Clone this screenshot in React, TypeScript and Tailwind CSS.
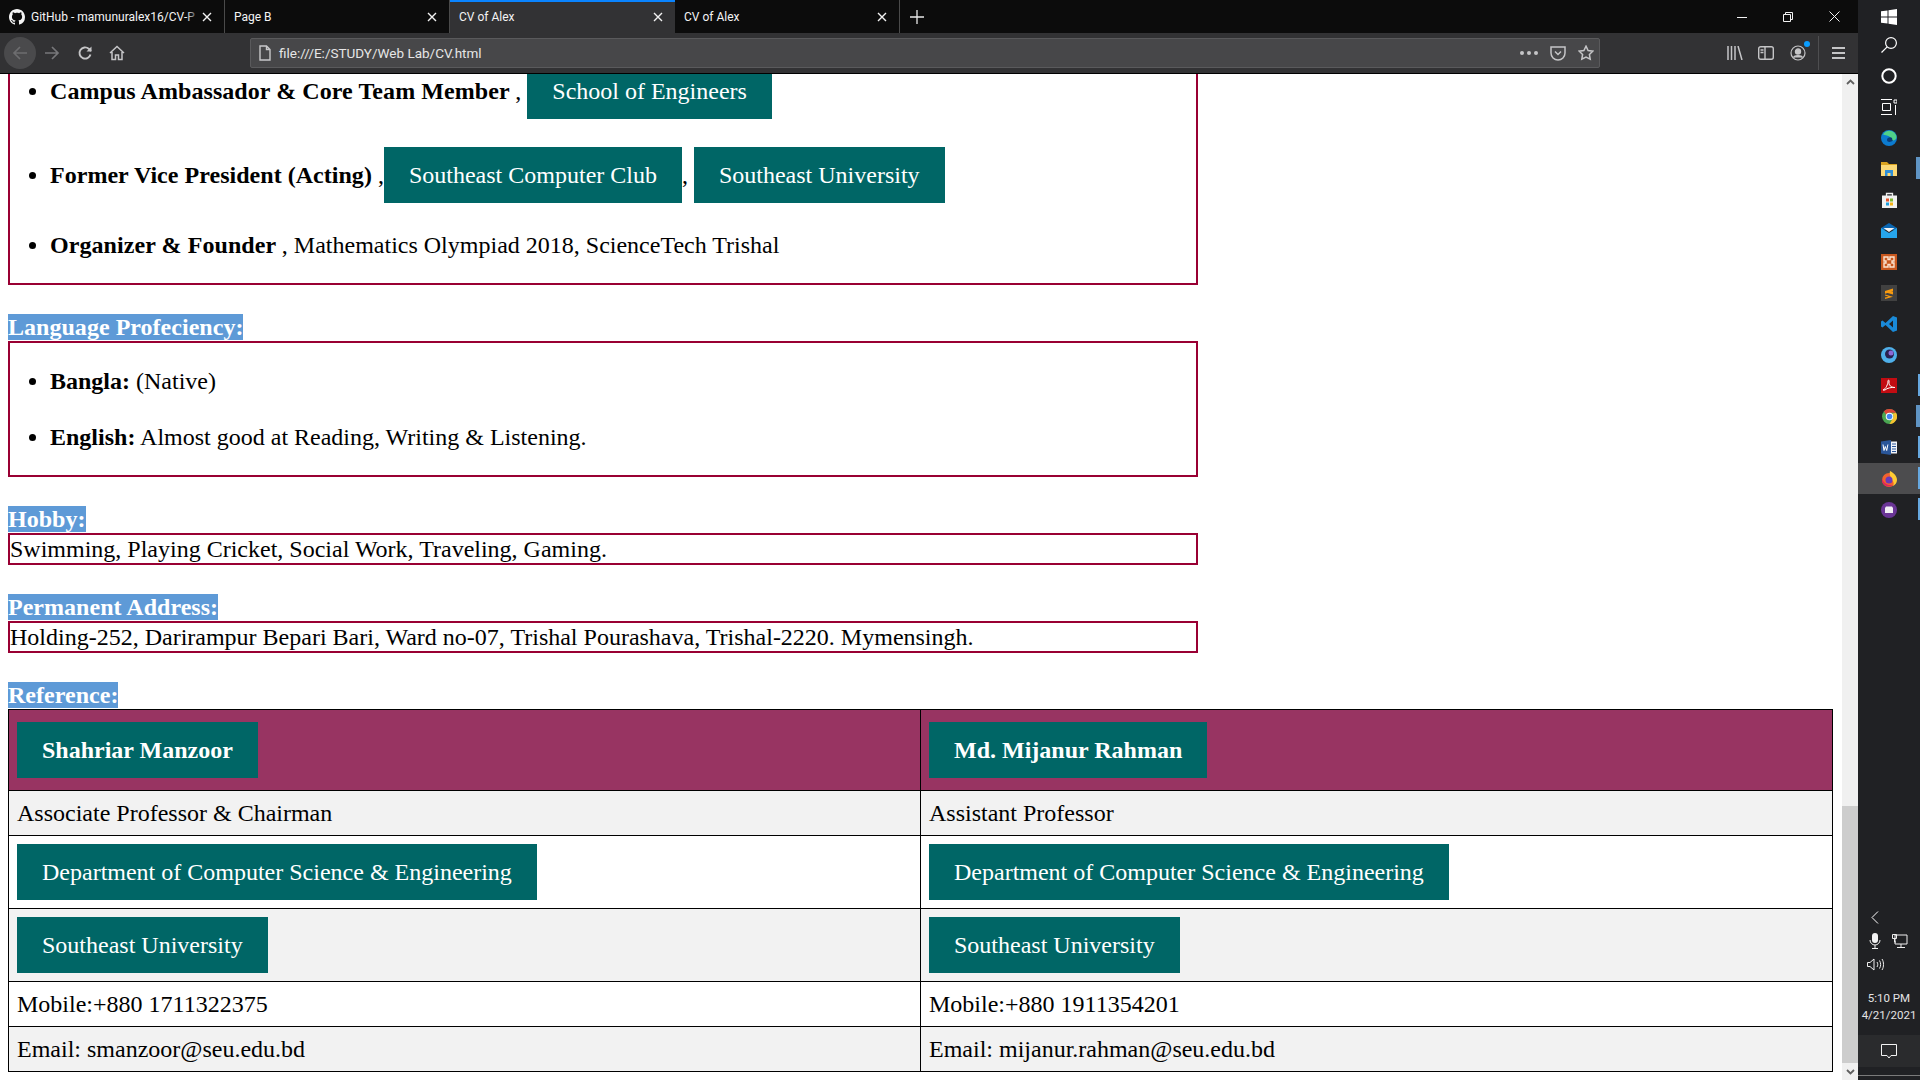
import { Fragment, type ReactNode } from 'react'

const uiFont = "font-['Roboto',sans-serif]"

function CloseIcon() {
  return (
    <svg width="10" height="10" viewBox="0 0 10 10" className="shrink-0">
      <path d="M1 1l8 8M9 1l-8 8" stroke="#f2f2f2" strokeWidth="1.4" fill="none" />
    </svg>
  )
}

function Tab({ title, active, github }: { title: string; active?: boolean; github?: boolean }) {
  return (
    <div
      className={`relative flex h-full w-[225px] items-center gap-[6px] pl-[9px] pr-[12px] text-[12px] text-[#f4f4f4] ${
        active ? 'bg-[#323234]' : 'border-r border-[#4a4a4a]'
      }`}
    >
      {active && <div className="absolute left-0 right-0 top-0 h-[2px] bg-[#0a84ff]" />}
      {github && (
        <svg width="16" height="16" viewBox="0 0 16 16" className="shrink-0" fill="#f4f4f4">
          <path d="M8 0C3.58 0 0 3.58 0 8c0 3.54 2.29 6.53 5.47 7.59.4.07.55-.17.55-.38 0-.19-.01-.82-.01-1.49-2.01.37-2.53-.49-2.69-.94-.09-.23-.48-.94-.82-1.13-.28-.15-.68-.52-.01-.53.63-.01 1.08.58 1.23.82.72 1.21 1.87.87 2.33.66.07-.52.28-.87.51-1.07-1.78-.2-3.64-.89-3.64-3.95 0-.87.31-1.59.82-2.15-.08-.2-.36-1.02.08-2.12 0 0 .67-.21 2.2.82.64-.18 1.32-.27 2-.27s1.36.09 2 .27c1.53-1.04 2.2-.82 2.2-.82.44 1.1.16 1.92.08 2.12.51.56.82 1.27.82 2.15 0 3.07-1.87 3.75-3.65 3.95.29.25.54.73.54 1.48 0 1.07-.01 1.93-.01 2.2 0 .21.15.46.55.38A8.01 8.01 0 0 0 16 8c0-4.42-3.58-8-8-8z" />
        </svg>
      )}
      <span className="relative min-w-0 flex-1 whitespace-nowrap">
        {title}
        {github && <span className="absolute bottom-0 right-[-4px] top-0 w-[14px] bg-gradient-to-r from-transparent to-[#0c0c0c]" />}
      </span>
      <CloseIcon />
    </div>
  )
}

function TitleBar() {
  return (
    <div className="flex h-[33px] items-center bg-[#0c0c0c]">
      <Tab github title="GitHub - mamunuralex16/CV-P" />
      <Tab title="Page B" />
      <Tab active title="CV of Alex" />
      <Tab title="CV of Alex" />
      <div className="flex h-full w-[33px] items-center justify-center">
        <svg width="14" height="14" viewBox="0 0 14 14">
          <path d="M7 0v14M0 7h14" stroke="#e8e8e8" strokeWidth="1.3" />
        </svg>
      </div>
      <div className="flex-1" />
      <div className="flex h-full items-center gap-[36px] pr-[18px]">
        <svg width="10" height="10" viewBox="0 0 10 10">
          <path d="M0 5.5h10" stroke="#f2f2f2" />
        </svg>
        <svg width="10" height="10" viewBox="0 0 10 10" fill="none" stroke="#f2f2f2">
          <path d="M.5 2.5h7v7h-7zM2.5 2.5v-2h7v7h-2" />
        </svg>
        <svg width="11" height="11" viewBox="0 0 11 11" stroke="#f2f2f2">
          <path d="M.5.5l10 10M10.5.5l-10 10" />
        </svg>
      </div>
    </div>
  )
}

function ToolBar() {
  return (
    <div className="flex h-[41px] items-center border-b border-black bg-[#323234]">
      <div className="ml-[4px] flex h-[32px] w-[32px] items-center justify-center rounded-full bg-[#4a4a4c]">
        <svg width="16" height="16" viewBox="0 0 16 16" fill="none" stroke="#6d6d6f" strokeWidth="1.7">
          <path d="M15 8H2M8 2L2 8l6 6" />
        </svg>
      </div>
      <div className="ml-[8px] flex w-[16px] justify-center">
        <svg width="16" height="16" viewBox="0 0 16 16" fill="none" stroke="#77777a" strokeWidth="1.7">
          <path d="M1 8h13M8 2l6 6-6 6" />
        </svg>
      </div>
      <div className="ml-[17px] flex w-[16px] justify-center">
        <svg width="16" height="16" viewBox="0 0 16 16" fill="none" stroke="#c5c5c7" strokeWidth="1.9">
          <path d="M13.5 9.5A5.6 5.6 0 1 1 11.8 3.8L14 6" />
          <path d="M14.5 1.5v5h-5" fill="#c5c5c7" stroke="none" />
        </svg>
      </div>
      <div className="ml-[16px] flex w-[16px] justify-center">
        <svg width="16" height="16" viewBox="0 0 16 16" fill="none" stroke="#c5c5c7" strokeWidth="1.5">
          <path d="M1 8l7-6.5L15 8M3 7v7.5h3.5V10h3v4.500H13V7" />
        </svg>
      </div>
      <div className="ml-[125px] flex h-[30px] w-[1350px] items-center rounded-[2px] border border-[#5a5a5c] bg-[#474749] pl-[7px] pr-[5px]">
        <svg width="14" height="16" viewBox="0 0 14 16" fill="none" stroke="#c8c8ca" strokeWidth="1.4">
          <path d="M2 1h6.500L12 4.500V15H2zM8.500 1v3.500H12" />
        </svg>
        <span className="ml-[7px] text-[13.500px] text-[#e6e6e6]">file:///E:/STUDY/Web Lab/CV.html</span>
        <div className="flex-1" />
        <div className="flex items-center gap-[3px]">
          <span className="h-[4px] w-[4px] rounded-full bg-[#c5c5c7]" />
          <span className="h-[4px] w-[4px] rounded-full bg-[#c5c5c7]" />
          <span className="h-[4px] w-[4px] rounded-full bg-[#c5c5c7]" />
        </div>
        <svg className="ml-[12px]" width="16" height="15" viewBox="0 0 16 15" fill="none" stroke="#c5c5c7" strokeWidth="1.5">
          <path d="M1 1h14v6a7 7 0 0 1-14 0zM5 5.500l3 3 3-3" />
        </svg>
        <svg className="ml-[12px]" width="16" height="16" viewBox="0 0 16 16" fill="none" stroke="#c5c5c7" strokeWidth="1.5">
          <path d="M8 1.200l2.100 4.300 4.700.7-3.400 3.300.8 4.700L8 12l-4.200 2.200.8-4.700L1.200 6.200l4.700-.7z" />
        </svg>
      </div>
      <div className="ml-[127px] flex items-center">
        <svg width="16" height="14" viewBox="0 0 16 14" stroke="#c5c5c7" strokeWidth="1.5" fill="none">
          <path d="M1 0v14M4.500 0v14M8 0v14M11 0l4 14" />
        </svg>
        <svg className="ml-[15px]" width="16" height="14" viewBox="0 0 16 14" fill="none" stroke="#c5c5c7" strokeWidth="1.4">
          <rect x=".7" y=".7" width="14.600" height="12.600" rx="2" />
          <path d="M7 .7v12.600M2.500 4h3M2.500 6.500h3" />
        </svg>
        <div className="relative ml-[16px]">
          <svg width="16" height="16" viewBox="0 0 16 16" fill="none" stroke="#c5c5c7" strokeWidth="1.2">
            <circle cx="8" cy="8" r="7" />
            <circle cx="8" cy="6.500" r="2.600" fill="#c5c5c7" />
            <path d="M3.500 12.500c1-2.500 8-2.500 9 0" fill="#c5c5c7" />
          </svg>
          <span className="absolute right-[-4px] top-[-4px] h-[6px] w-[6px] rounded-full bg-[#0a9dff]" />
        </div>
      </div>
      <div className="ml-[12px] h-[34px] w-px bg-[#4e4e50]" />
      <div className="ml-[13px] flex flex-col gap-[3px]">
        <span className="h-[2px] w-[13px] bg-[#c5c5c7]" />
        <span className="h-[2px] w-[13px] bg-[#c5c5c7]" />
        <span className="h-[2px] w-[13px] bg-[#c5c5c7]" />
      </div>
    </div>
  )
}

function Pill({ children }: { children: ReactNode }) {
  return <span className="inline-block bg-[#006666] px-[25px] py-[14px] text-white">{children}</span>
}

function SectionTitle({ children }: { children: ReactNode }) {
  return (
    <div className="mt-[28px] h-[28px]">
      <span className="bg-[#5e9ad7] font-bold tracking-[0.03px] text-white">{children}</span>
    </div>
  )
}

function LineBox({ children }: { children: ReactNode }) {
  return <div className="w-[1190px] border-2 border-[#990033]">{children}</div>
}

function Cv() {
  return (
    <div className="h-full flex-1 overflow-hidden bg-white pl-[8px] font-['Liberation_Serif',serif] text-[24px] leading-[28px] text-black">
      <div className="-mt-[11px] w-[1190px] border-x-2 border-b-2 border-[#990033]">
        <ul className="mb-[24px] list-disc pl-[40px]">
          <li>
            <b className="tracking-[0.07px]">Campus Ambassador &amp; Core Team Member </b>, <Pill>School of Engineers</Pill>
          </li>
          <li className="mt-[28px]">
            <b className="tracking-[0.03px]">Former Vice President (Acting) </b>,<Pill>Southeast Computer Club</Pill>, <Pill>Southeast University</Pill>
          </li>
          <li className="mt-[28px]">
            <b className="tracking-[0.07px]">Organizer &amp; Founder </b>, Mathematics Olympiad 2018, ScienceTech Trishal
          </li>
        </ul>
      </div>

      <SectionTitle>Language Profeciency:</SectionTitle>
      <LineBox>
        <ul className="my-[24px] list-disc pl-[40px]">
          <li>
            <b>Bangla:</b> (Native)
          </li>
          <li className="mt-[28px]">
            <b>English:</b> Almost good at Reading, Writing &amp; Listening.
          </li>
        </ul>
      </LineBox>

      <SectionTitle>Hobby:</SectionTitle>
      <LineBox>Swimming, Playing Cricket, Social Work, Traveling, Gaming.</LineBox>

      <SectionTitle>Permanent Address:</SectionTitle>
      <LineBox>Holding-252, Darirampur Bepari Bari, Ward no-07, Trishal Pourashava, Trishal-2220. Mymensingh.</LineBox>

      <SectionTitle>Reference:</SectionTitle>
      <table className="w-[1825px] table-fixed border-collapse border border-black">
        <tbody>
          <tr className="bg-[#983462]">
            <th className="border border-black px-[8px] py-[12px] text-left font-bold"><Pill>Shahriar Manzoor</Pill></th>
            <th className="border border-black px-[8px] py-[12px] text-left font-bold"><Pill>Md. Mijanur Rahman</Pill></th>
          </tr>
          {refRows.map((row, i) => (
            <tr key={i} className={i % 2 === 0 ? 'bg-[#f2f2f2]' : 'bg-white'}>
              {row.map((cell, j) => (
                <td key={j} className="border border-black p-[8px]">
                  {cell}
                </td>
              ))}
            </tr>
          ))}
        </tbody>
      </table>
    </div>
  )
}

const refRows: ReactNode[][] = [
  ['Associate Professor & Chairman', 'Assistant Professor'],
  [<Pill>Department of Computer Science &amp; Engineering</Pill>, <Pill>Department of Computer Science &amp; Engineering</Pill>],
  [<Pill>Southeast University</Pill>, <Pill>Southeast University</Pill>],
  ['Mobile:+880 1711322375', 'Mobile:+880 1911354201'],
  ['Email: smanzoor@seu.edu.bd', 'Email: mijanur.rahman@seu.edu.bd'],
]

function ScrollBar() {
  return (
    <div className="flex h-full w-[16px] shrink-0 flex-col bg-[#f0f0f0]">
      <div className="flex h-[16px] items-center justify-center">
        <svg width="9" height="6" viewBox="0 0 9 6" fill="none" stroke="#606060" strokeWidth="1.800">
          <path d="M1 5l3.500-3.500L8 5" />
        </svg>
      </div>
      <div className="flex-1" />
      <div className="h-[257px] bg-[#cdcdcd]" />
      <div className="flex h-[17px] items-center justify-center">
        <svg width="9" height="6" viewBox="0 0 9 6" fill="none" stroke="#606060" strokeWidth="1.800">
          <path d="M1 1l3.500 3.500L8 1" />
        </svg>
      </div>
    </div>
  )
}

const taskIcons: { key: string; bar?: 'wide' | 'thin'; active?: boolean; icon: ReactNode }[] = [
  {
    key: 'search',
    icon: (
      <svg width="16" height="16" viewBox="0 0 16 16" fill="none" stroke="#fff" strokeWidth="1.200">
        <circle cx="10" cy="6" r="5.400" />
        <path d="M6.200 9.800L.5 15.500" />
      </svg>
    ),
  },
  {
    key: 'cortana',
    icon: (
      <svg width="16" height="16" viewBox="0 0 16 16" fill="none" stroke="#fff" strokeWidth="2">
        <circle cx="8" cy="8" r="6.700" />
      </svg>
    ),
  },
  {
    key: 'tasks',
    icon: (
      <svg width="16" height="16" viewBox="0 0 16 16" fill="none" stroke="#fff">
        <path d="M0 .5h11M0 15.500h11M1.500 4.500h8v7h-8zM14.500 6v10M13 1h3v3h-3z" />
      </svg>
    ),
  },
  {
    key: 'edge',
    icon: (
      <svg width="16" height="16" viewBox="0 0 16 16">
        <circle cx="8" cy="8" r="8" fill="#0c7bd0" />
        <path d="M2 4.500C4 0 12-1 15 5c1.400 3-.5 5.500-3 5.500-2 0-3.500-1-2.500-3C8 5.500 4 5 2 4.500z" fill="#4fd18a" />
        <path d="M6 10c0-3 4-3.500 5-2 .5 1 0 2 1 2.500-2 2-6 2-6-.5z" fill="#0a3d78" />
      </svg>
    ),
  },
  {
    key: 'explorer',
    bar: 'wide',
    icon: (
      <svg width="16" height="14" viewBox="0 0 16 14">
        <path d="M0 0h6l2 2h8v2H0z" fill="#d9a21f" />
        <path d="M0 3h16v11H0z" fill="#fbd977" />
        <path d="M4 8h8v6h-2.500v-3h-3v3H4z" fill="#2f8fd8" />
      </svg>
    ),
  },
  {
    key: 'store',
    icon: (
      <svg width="15" height="16" viewBox="0 0 15 16">
        <path d="M4.500 4V1.500h6V4" fill="none" stroke="#eee" strokeWidth="1.300" />
        <path d="M0 3.500h15V16H0z" fill="#f1f1f1" />
        <path d="M4 6.500h3v3H4z" fill="#e2522a" />
        <path d="M8 6.500h3v3H8z" fill="#7db72f" />
        <path d="M4 10.500h3v3H4z" fill="#1d9fdd" />
        <path d="M8 10.500h3v3H8z" fill="#f5b418" />
      </svg>
    ),
  },
  {
    key: 'mail',
    icon: (
      <svg width="16" height="15" viewBox="0 0 16 15">
        <path d="M8 0l8 5v2H0V5z" fill="#0a65b0" />
        <path d="M2.500 5h11l-5.500 4z" fill="#f2f2f2" />
        <path d="M0 5l8 5 8-5v10H0z" fill="#26a5ec" />
      </svg>
    ),
  },
  {
    key: 'xampp',
    icon: (
      <svg width="16" height="16" viewBox="0 0 16 16">
        <path d="M0 0h16v16H0z" fill="#c8571e" />
        <path d="M3 3h4v2.500h2V3h4v4h-2v2h2v4H9v-2.500H7V13H3V9h2V7H3z" fill="none" stroke="#fbe3cf" strokeWidth="1.400" />
      </svg>
    ),
  },
  {
    key: 'sublime',
    icon: (
      <svg width="16" height="16" viewBox="0 0 16 16">
        <path d="M0 0h16v16H0z" fill="#414141" />
        <path d="M4 6l8-2.500v2.800L4 8.800zM4 9.500l8 2.200-8 2.300v-1.500l3.500-.8L4 10.500zM12 6.800v2.700L4 7.200z" fill="#f79a0f" />
      </svg>
    ),
  },
  {
    key: 'vscode',
    icon: (
      <svg width="16" height="16" viewBox="0 0 16 16">
        <path d="M12 0l4 1.500v13L12 16 4.500 9 1.500 11.500 0 10.500V5.500l1.500-1L4.500 7zm0 4.500L8 8l4 3.500z" fill="#1a8ad8" />
      </svg>
    ),
  },
  {
    key: 'app',
    icon: (
      <svg width="16" height="16" viewBox="0 0 16 16">
        <circle cx="8" cy="8" r="8" fill="#4fb0ea" />
        <circle cx="8.500" cy="7" r="4.500" fill="#2a2150" />
        <circle cx="10" cy="6" r="2.500" fill="#8b6ad6" />
      </svg>
    ),
  },
  {
    key: 'acrobat',
    bar: 'thin',
    icon: (
      <svg width="16" height="15" viewBox="0 0 16 15">
        <path d="M0 0h16v15H0z" fill="#c20c12" />
        <path d="M2 12c3-1 5-6 5-9 0-1.500 1.500-1 1 1-.5 3 2 5.500 6 5.500-3-.5-8 .5-10 2.500z" fill="none" stroke="#fff" strokeWidth="1" />
      </svg>
    ),
  },
  {
    key: 'chrome',
    bar: 'wide',
    icon: (
      <svg width="15" height="15" viewBox="0 0 16 16">
        <circle cx="8" cy="8" r="8" fill="#4aa652" />
        <path d="M8 0a8 8 0 0 1 7 4H8a4 4 0 0 0-3.500 2L2 2.500A8 8 0 0 1 8 0z" fill="#dc4437" />
        <path d="M15 4a8 8 0 0 1-7 12l3.500-6A4 4 0 0 0 11 5z" fill="#f6c12e" />
        <circle cx="8" cy="8" r="4" fill="#fff" />
        <circle cx="8" cy="8" r="3" fill="#4285f4" />
      </svg>
    ),
  },
  {
    key: 'word',
    bar: 'thin',
    icon: (
      <svg width="16" height="15" viewBox="0 0 16 15">
        <path d="M10 1.500h6v12h-6z" fill="#f1f3f8" />
        <path d="M11 4h4M11 6.500h4M11 9h4M11 11.500h4" stroke="#2a5699" />
        <path d="M0 1.500L10 0v15L0 13.500z" fill="#2a5699" />
        <path d="M2 4.500l1 6 1.300-4 1.400 4 1.200-6" fill="none" stroke="#fff" strokeWidth="1" />
      </svg>
    ),
  },
  {
    key: 'firefox',
    bar: 'thin',
    active: true,
    icon: (
      <svg width="16" height="16" viewBox="0 0 16 16">
        <circle cx="8" cy="9" r="7" fill="#f2622e" />
        <path d="M9 0c4 2 7 5 7 9 0 3-2 5-4 6 1-2 1-4-1-6-1-3-3-5-2-9z" fill="#ffcb33" />
        <circle cx="8" cy="9" r="3.500" fill="#6a3ab8" />
        <path d="M1 7c1 5 6 8 11 7-2 1.500-5 2-8 .5C1.500 13 .5 10 1 7z" fill="#e0245e" />
      </svg>
    ),
  },
  {
    key: 'tor',
    bar: 'thin',
    icon: (
      <svg width="16" height="16" viewBox="0 0 16 16">
        <circle cx="8" cy="8" r="8" fill="#6a3596" />
        <path d="M4 6l1-1.500h6L12 6v5H4z" fill="#f2f0f5" />
      </svg>
    ),
  },
]

function TaskBar() {
  return (
    <div className={`flex h-full w-[62px] shrink-0 flex-col bg-[#202124] pt-[1px] ${uiFont}`}>
      <div className="flex h-[28px] items-center justify-center pt-[4px]">
        <svg width="16" height="16" viewBox="0 0 16 16" fill="#fff">
          <path d="M0 2.300L6.500 1.400V7.500H0zM7.500 1.200L16 0V7.500H7.500zM0 8.500H6.500V14.600L0 13.700zM7.500 8.500H16V16L7.500 14.800z" />
        </svg>
      </div>
      {taskIcons.map((t) => (
        <Fragment key={t.key}>
          <div className={`relative flex h-[31px] items-center justify-center ${t.active ? 'bg-[#4c4c4e]' : ''}`}>
            {t.icon}
            {t.bar === 'wide' && <span className="absolute right-0 top-[4px] h-[22px] w-[4px] bg-[#5f94c4]" />}
            {t.bar === 'thin' && <span className="absolute right-0 top-[4px] h-[22px] w-[2px] bg-[#66a8e0]" />}
          </div>
        </Fragment>
      ))}
      <div className="flex-1" />
      <div className="flex flex-col items-start pl-[12px]">
        <svg width="8" height="13" viewBox="0 0 8 13" fill="none" stroke="#fff" className="ml-[1px]">
          <path d="M7 .5l-6 6 6 6" />
        </svg>
        <div className="mt-[9px] flex items-center gap-[11px]">
          <svg width="12" height="16" viewBox="0 0 12 16" className="ml-[-1px]">
            <rect x="3" y="0" width="6" height="10" rx="3" fill="#f2f2f2" />
            <path d="M1 7a5 5 0 0 0 10 0M6 12v3M3 15.500h6" fill="none" stroke="#f2f2f2" />
          </svg>
          <svg width="16" height="14" viewBox="0 0 16 14" fill="none" stroke="#eee">
            <path d="M3 1h12v9H3zM9 10v3M5 13.500h8M.5.500h4v4h-4zM2.500 4.500V8H4" />
          </svg>
        </div>
        <svg width="17" height="13" viewBox="0 0 17 13" fill="none" stroke="#eee" className="mt-[9px] ml-[-3px]">
          <path d="M.5 4.500h2.500L7 1v11L3 8.500H.5zM10 4c1 1.500 1 3.500 0 5M12.500 2.500c1.500 2.500 1.500 5.500 0 8M15 1c2 3 2 8 0 11" />
        </svg>
      </div>
      <div className="mt-[19px] text-center text-[11.500px] leading-[17px] text-[#e4e4e4]">
        <div>5:10 PM</div>
        <div>4/21/2021</div>
      </div>
      <div className="mt-[11px] flex h-[32px] items-center justify-center bg-[#2a2b2d]">
        <svg width="16" height="15" viewBox="0 0 16 15" fill="none" stroke="#f2f2f2">
          <path d="M.5.500h15v11h-5.500L8 14l-2-2.500H.5z" />
        </svg>
      </div>
      <div className="mt-[8px] h-[1px] bg-[#7a7a7a]" />
      <div className="h-[4px]" />
    </div>
  )
}

export default function App() {
  return (
    <div className="flex h-[1080px] w-[1920px] overflow-hidden">
      <div className={`flex h-full w-[1858px] flex-col ${uiFont}`}>
        <TitleBar />
        <ToolBar />
        <div className="flex min-h-0 flex-1">
          <Cv />
          <ScrollBar />
        </div>
      </div>
      <TaskBar />
    </div>
  )
}
